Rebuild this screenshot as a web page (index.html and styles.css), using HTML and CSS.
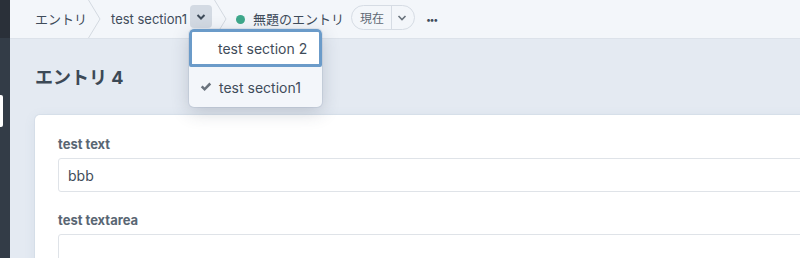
FILE: index.html
```html
<!DOCTYPE html>
<html lang="ja">

<head>
  <meta charset="UTF-8">
  <meta name="viewport" content="width=device-width, initial-scale=1.0">
  <title>エントリ 4</title>
  <link rel="stylesheet" href="styles.css">
</head>

<body>
  <div class="cp-side">
    <div class="cp-side-top"></div>
    <div class="cp-side-tab"></div>
  </div>

  <div class="cp-main">
    <header class="cp-crumbs">
      <span class="cp-crumb">エントリ</span>
      <svg class="cp-crumb-sep" width="13" height="38" viewBox="0 0 13 38">
        <polyline points="0.5,0 12,19 0.5,38" fill="none" stroke="#d3d9e0" stroke-width="1" />
      </svg>
      <span class="cp-crumb cp-crumb-site">test section1</span>
      <div class="cp-toggle-wrap">
        <button class="cp-toggle">
          <svg width="10" height="8" viewBox="0 0 10 8">
            <polyline points="1.5,2 5,5.5 8.5,2" fill="none" stroke="#3f4c5a" stroke-width="2" />
          </svg>
        </button>
        <!-- ドロップダウン -->
        <ul class="cp-menu">
          <li class="cp-menu-item cp-menu-focus">test section 2</li>
          <li class="cp-menu-item cp-menu-sel">
            <svg class="cp-check" width="12" height="10" viewBox="0 0 12 10">
              <path d="M0.8 5.2 L2.6 3.4 L4.6 5.4 L9.4 0.6 L11.2 2.4 L4.6 9 Z" fill="#6a737d" />
            </svg>
            test section1
          </li>
        </ul>
      </div>
      <svg class="cp-crumb-sep cp-crumb-sep2" width="13" height="38" viewBox="0 0 13 38">
        <polyline points="0.5,0 12,19 0.5,38" fill="none" stroke="#d3d9e0" stroke-width="1" />
      </svg>
      <span class="cp-status"></span>
      <span class="cp-crumb cp-crumb-entry">無題のエントリ</span>
      <div class="cp-rev">
        <span class="cp-rev-label">現在</span>
        <span class="cp-rev-btn">
          <svg width="10" height="8" viewBox="0 0 10 8">
            <polyline points="1.5,2 5,5.5 8.5,2" fill="none" stroke="#6a737d" stroke-width="1.6" />
          </svg>
        </span>
      </div>
      <span class="cp-more">•••</span>
    </header>

    <div class="cp-content">
      <h1 class="cp-title">エントリ 4</h1>
      <div class="cp-card">
        <div class="cp-field">
          <label class="cp-label">test text</label>
          <div class="cp-input">bbb</div>
        </div>
        <div class="cp-field">
          <label class="cp-label">test textarea</label>
          <div class="cp-input cp-textarea"></div>
        </div>
      </div>
    </div>
  </div>
</body>

</html>
```

FILE: styles.css
```css
* {
  font-family: 'Inter', 'Noto Sans CJK JP', sans-serif;
  padding: 0;
  margin: 0;
  box-sizing: border-box;
}

body {
  width: 800px;
  height: 258px;
  overflow: hidden;
  display: flex;
  background: #e4eaf2;
}

.cp-side {
  width: 10px;
  flex-shrink: 0;
  background: #333c47;
  display: flex;
  flex-direction: column;
}

.cp-side-top {
  height: 38px;
  background: #2a3039;
}

.cp-side-tab {
  margin-top: 57px;
  width: 3px;
  height: 32px;
  background: #ffffff;
  border-radius: 0 2px 2px 0;
}

.cp-main {
  flex: 1;
  min-width: 0;
  display: flex;
  flex-direction: column;
}

/* パンくず */
.cp-crumbs {
  height: 39px;
  flex-shrink: 0;
  background: #f3f6fa;
  border-bottom: 1px solid #dce2ea;
  padding-left: 25px;
  display: flex;
  align-items: center;
  position: relative;
  z-index: 2;
}

.cp-crumb {
  font-size: 13px;
  color: #3f4c5a;
  line-height: 38px;
}

.cp-crumb-sep {
  margin: 0 10px 0 1px;
  flex-shrink: 0;
  align-self: flex-start;
}

.cp-crumb-sep2 {
  margin: 0 9px 0 2px;
}

.cp-toggle-wrap {
  position: relative;
  margin-left: 3px;
  align-self: flex-start;
  margin-top: 5px;
}

.cp-toggle {
  width: 22px;
  height: 23px;
  border: none;
  border-radius: 4px;
  background: #d3dae3;
  display: flex;
  align-items: center;
  justify-content: center;
}

.cp-menu {
  position: absolute;
  top: 24px;
  left: -1px;
  width: 133px;
  list-style: none;
  background: #f3f6fa;
  border-radius: 5px;
  box-shadow: 0 0 0 1px rgba(96, 125, 159, 0.12), 0 5px 18px rgba(50, 60, 80, 0.22);
  overflow: hidden;
}

.cp-menu-item {
  height: 40px;
  padding-left: 29px;
  font-size: 14px;
  color: #3f4c5a;
  display: flex;
  align-items: center;
}

.cp-menu-focus {
  height: 38px;
  background: #ffffff;
  border: 3px solid #6b9bc9;
  border-radius: 4px 4px 2px 2px;
  padding-left: 26px;
}

.cp-menu-sel {
  padding-left: 11px;
}

.cp-check {
  margin-right: 7px;
}

.cp-status {
  width: 9px;
  height: 9px;
  border-radius: 50%;
  background: #3ea88b;
  margin-right: 8px;
}

.cp-rev {
  margin-left: 7px;
  align-self: flex-start;
  margin-top: 5px;
  height: 25px;
  display: flex;
  border: 1px solid #d6dce4;
  border-radius: 13px;
  overflow: hidden;
}

.cp-rev-label {
  font-size: 12px;
  color: #5d6874;
  padding: 0 7px 0 8px;
  display: flex;
  align-items: center;
  border-right: 1px solid #d6dce4;
}

.cp-rev-btn {
  width: 22px;
  display: flex;
  align-items: center;
  justify-content: center;
  padding-right: 2px;
}

.cp-more {
  margin-left: 11px;
  font-size: 9px;
  letter-spacing: -1.5px;
  color: #3f4c5a;
}

/* 本文 */
.cp-content {
  padding: 0 0 0 25px;
}

.cp-title {
  font-size: 18px;
  font-weight: 700;
  color: #3c4956;
  line-height: 24px;
  padding-top: 27px;
  padding-bottom: 25px;
}

.cp-card {
  width: 820px;
  background: #ffffff;
  border-radius: 5px;
  box-shadow: 0 0 0 1px rgba(205, 216, 228, 0.5), 0 2px 12px rgba(96, 125, 159, 0.1);
  padding: 21px 23px;
  display: flex;
  flex-direction: column;
  row-gap: 20px;
}

.cp-label {
  display: block;
  font-size: 13px;
  font-weight: 700;
  color: #596673;
  line-height: 16px;
  margin-bottom: 6px;
}

.cp-input {
  height: 34px;
  border: 1px solid #dfe3e8;
  border-radius: 3px;
  padding-left: 9px;
  font-size: 14px;
  color: #3f4c5a;
  display: flex;
  align-items: center;
}

.cp-textarea {
  height: 80px;
}
```
